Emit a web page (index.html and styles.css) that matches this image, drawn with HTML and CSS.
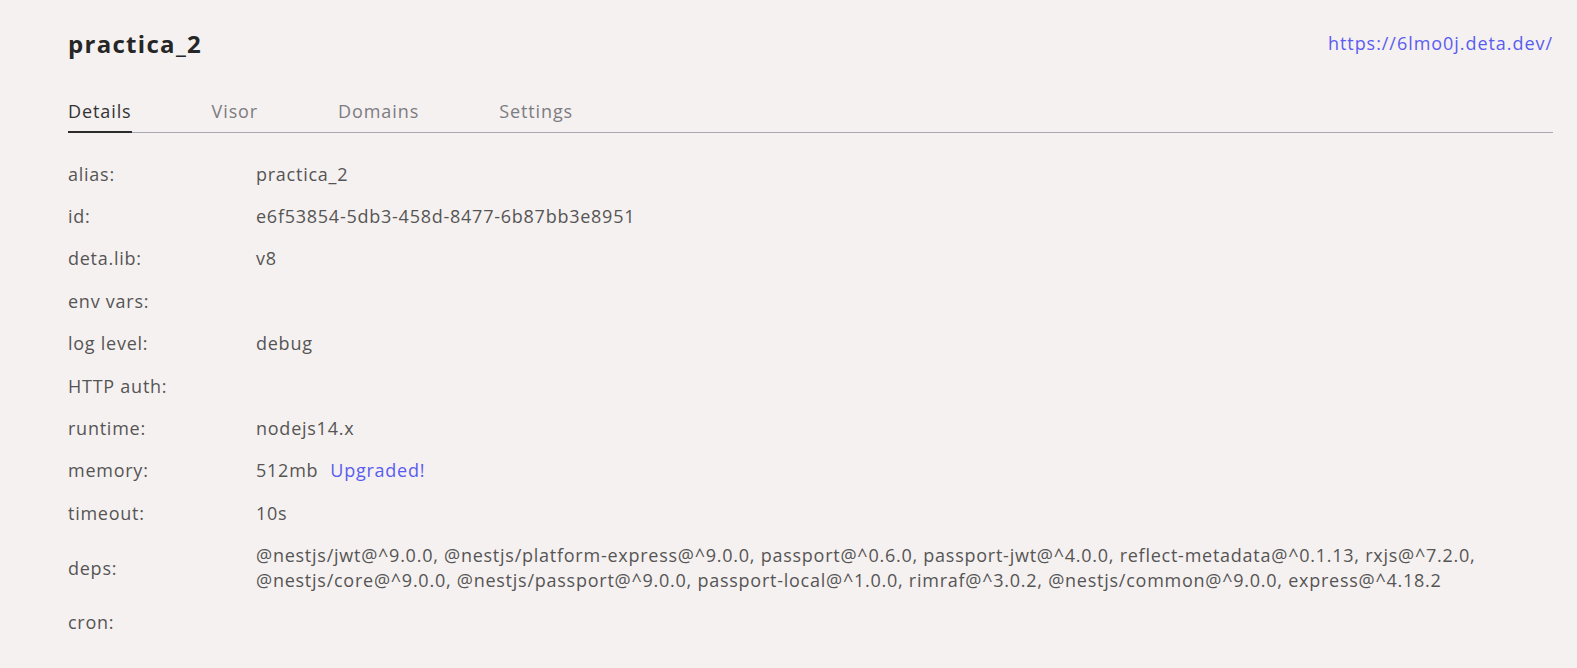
FILE: index.html
```html
<!DOCTYPE html>
<html lang="en">
<head>
<meta charset="utf-8">
<title>practica_2</title>
<link rel="stylesheet" href="styles.css">
</head>
<body>
<main class="page">
  <header class="header">
    <h1 class="title">practica_2</h1>
    <a class="endpoint" href="#">https://6lmo0j.deta.dev/</a>
  </header>
  <nav class="tabs">
    <a class="tab tab-active" href="#">Details</a>
    <a class="tab" href="#">Visor</a>
    <a class="tab" href="#">Domains</a>
    <a class="tab" href="#">Settings</a>
  </nav>
  <dl class="details">
    <div class="row"><dt class="label">alias:</dt><dd class="value">practica_2</dd></div>
    <div class="row"><dt class="label">id:</dt><dd class="value">e6f53854-5db3-458d-8477-6b87bb3e8951</dd></div>
    <div class="row"><dt class="label">deta.lib:</dt><dd class="value">v8</dd></div>
    <div class="row"><dt class="label">env vars:</dt><dd class="value"></dd></div>
    <div class="row"><dt class="label">log level:</dt><dd class="value">debug</dd></div>
    <div class="row"><dt class="label">HTTP auth:</dt><dd class="value"></dd></div>
    <div class="row"><dt class="label">runtime:</dt><dd class="value">nodejs14.x</dd></div>
    <div class="row"><dt class="label">memory:</dt><dd class="value">512mb<a class="upgraded" href="#">Upgraded!</a></dd></div>
    <div class="row"><dt class="label">timeout:</dt><dd class="value">10s</dd></div>
    <div class="row"><dt class="label">deps:</dt><dd class="value">@nestjs/jwt@^9.0.0, @nestjs/platform-express@^9.0.0, passport@^0.6.0, passport-jwt@^4.0.0, reflect-metadata@^0.1.13, rxjs@^7.2.0, @nestjs/core@^9.0.0, @nestjs/passport@^9.0.0, passport-local@^1.0.0, rimraf@^3.0.2, @nestjs/common@^9.0.0, express@^4.18.2</dd></div>
    <div class="row"><dt class="label">cron:</dt><dd class="value"></dd></div>
  </dl>
</main>
</body>
</html>
```
FILE: styles.css
```css
html, body {
  margin: 0;
  padding: 0;
  background: #f5f1f0;
}

body {
  font-family: "Open Sans", "Noto Sans", sans-serif;
  font-size: 18px;
  letter-spacing: 0.75px;
  color: #555555;
}

.page {
  padding: 28px 24px 0 68px;
}

.header {
  display: flex;
  justify-content: space-between;
  align-items: center;
  height: 32px;
  margin-bottom: 39px;
}

.title {
  margin: 0;
  font-size: 24px;
  font-weight: 700;
  line-height: 32px;
  letter-spacing: 1.3px;
  color: #262626;
}

.endpoint {
  color: #5a5cf0;
  text-decoration: none;
  line-height: 24px;
  letter-spacing: 0.95px;
  margin-top: -3px;
}

.tabs {
  display: flex;
  gap: 80px;
  border-bottom: 1px solid #a9a9b5;
}

.tab {
  display: block;
  line-height: 24px;
  letter-spacing: 0.9px;
  padding-bottom: 8px;
  margin-bottom: -1px;
  border-bottom: 2px solid transparent;
  color: #7c7c82;
  text-decoration: none;
}

.tab-active {
  color: #333333;
  border-bottom-color: #2b2b2b;
}

.details {
  margin: 20px 0 0;
}

.row {
  display: grid;
  grid-template-columns: 188px 1fr;
  align-items: center;
  padding: 8.7px 0;
  line-height: 25px;
}

.label,
.value {
  margin: 0;
  min-height: 25px;
}

.label {
  color: #555555;
}

.value {
  color: #555555;
}

.upgraded {
  margin-left: 12px;
  color: #5a5cf0;
  text-decoration: none;
}
```
